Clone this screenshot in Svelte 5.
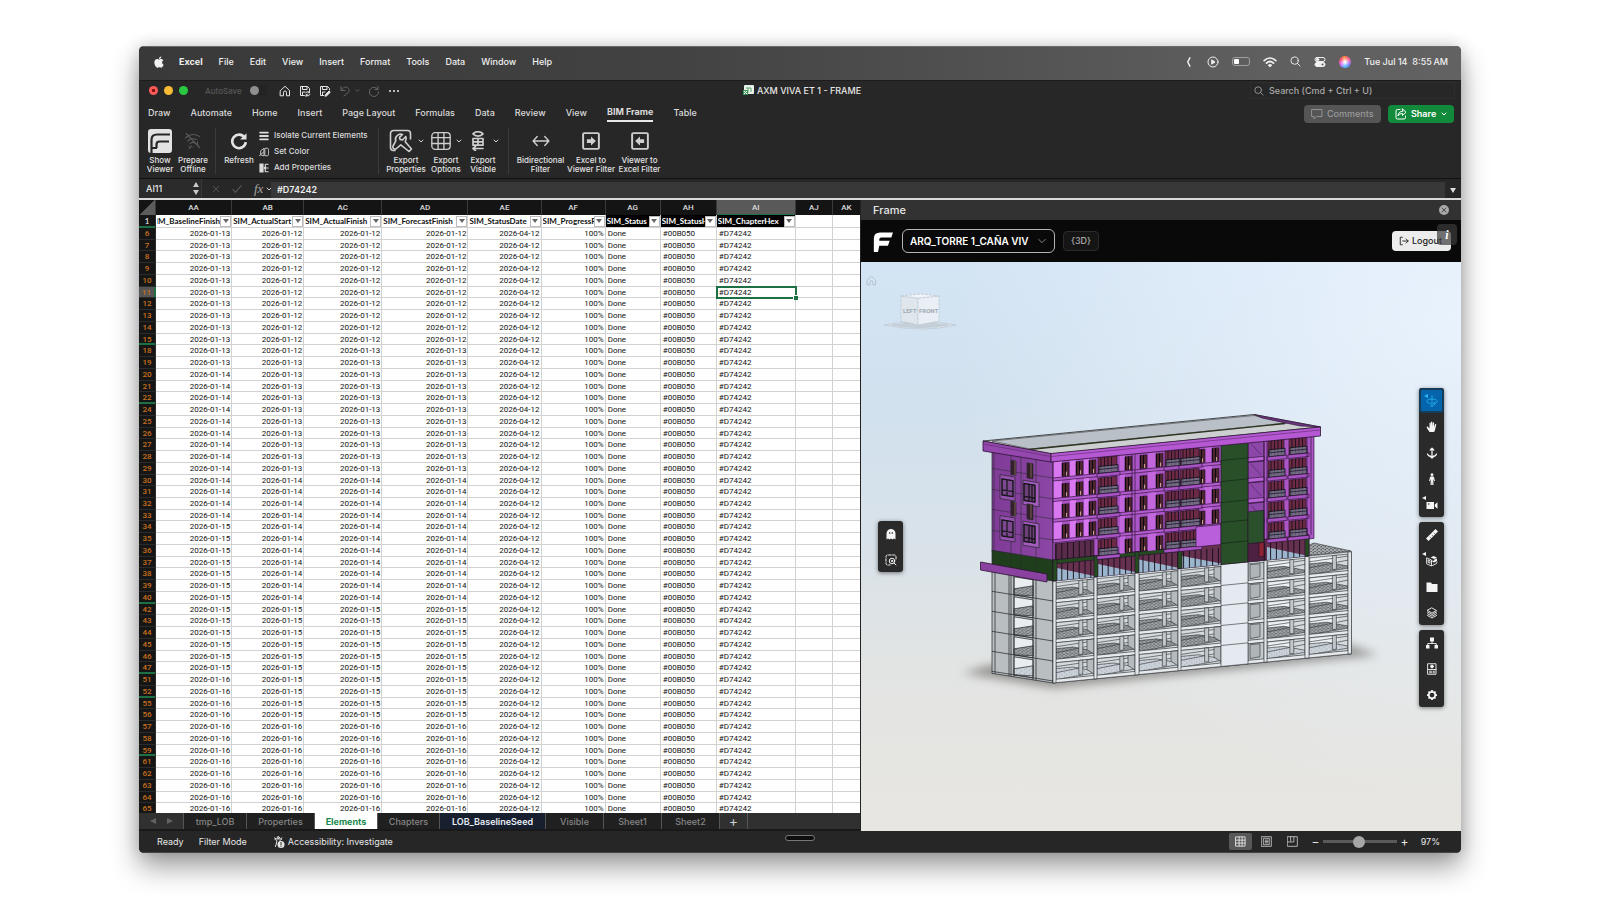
<script>
  const menus = ['File', 'Edit', 'View', 'Insert', 'Format', 'Tools', 'Data', 'Window', 'Help'];
  const tabs = ['Draw', 'Automate', 'Home', 'Insert', 'Page Layout', 'Formulas', 'Data', 'Review', 'View', 'BIM Frame', 'Table'];
  const columns = ['AA', 'AB', 'AC', 'AD', 'AE', 'AF', 'AG', 'AH', 'AI', 'AJ', 'AK'];
  const fields = ['SIM_BaselineFinish', 'SIM_ActualStart', 'SIM_ActualFinish', 'SIM_ForecastFinish', 'SIM_StatusDate', 'SIM_ProgressP', 'SIM_Status', 'SIM_StatusH', 'SIM_ChapterHex'];
  const sheets = [
    { name: 'tmp_LOB', width: 63 },
    { name: 'Properties', width: 68 },
    { name: 'Elements', width: 63 },
    { name: 'Chapters', width: 62 },
    { name: 'LOB_BaselineSeed', width: 106 },
    { name: 'Visible', width: 58 },
    { name: 'Sheet1', width: 58 },
    { name: 'Sheet2', width: 58 }
  ];

  const rowNumbers = [
    6, 7, 8, 9, 10, 11, 12, 13, 14, 15, 18, 19, 20, 21, 22, 24, 25, 26, 27, 28, 29, 30, 31, 32, 33,
    34, 35, 36, 37, 38, 39, 40, 42, 43, 44, 45, 46, 47, 51, 52, 55, 56, 57, 58, 59, 61, 62, 63, 64, 65
  ];
  const gapAfter = [15, 22, 40, 47, 52, 59];
  const date = (day) => `2026-01-${day}`;
  const rows = rowNumbers.map((n) => {
    const finish = n < 18 ? 12 : n < 30 ? 13 : n < 42 ? 14 : n < 57 ? 15 : 16;
    return {
      n,
      cells: [
        date(n < 20 ? 13 : n < 34 ? 14 : n < 51 ? 15 : 16),
        date(n === 18 ? 12 : finish),
        date(finish),
        date(finish),
        '2026-04-12',
        '100%',
        'Done',
        '#00B050',
        '#D74242',
        '',
        ''
      ]
    };
  });

  const navTools = ['orbit', 'hand', 'dolly', 'person', 'camera'];
  const modelTools = ['ruler', 'section', 'folder', 'layers'];
  const panelTools = ['tree', 'props', 'gear'];

  // Facade geometry, in the sheared space of each face: x along the wall, y downward.
  const floors = [0, 1, 2, 3, 4];
  const pitch = 20.6;
  const windows = [9, 23, 36, 72, 87, 103, 145, 159];
  const brightBands = [[1, 8], [17, 6], [31, 5]];
  const paleBands = [[67, 5], [95, 8], [151, 8]];
  const balconies = [[45, 19], [112, 14], [127, 19], [215, 16], [236, 17]];
  const bays = [[3, 38], [44, 38], [86, 39], [127, 41], [195, 16], [214, 38], [256, 39]];
  const posts = [[0, 3], [41, 3], [82, 4], [125, 3], [211, 3], [252, 4], [295, 3.5]];
</script>

{#snippet icon(name, size = 12)}
  <svg class="icon" width={size} height={size} viewBox="0 0 24 24" fill="none" stroke="currentColor" stroke-width="2" stroke-linecap="round" stroke-linejoin="round" aria-hidden="true">
    {#if name === 'apple'}
      <path fill="currentColor" stroke="none" d="M17.3 12.7c0-2.500 2-3.700 2.100-3.800-1.200-1.700-3-1.900-3.600-2-1.500-.15-3 .9-3.700.9-.8 0-2-.9-3.200-.85-1.700 0-3.200 1-4.100 2.450-1.700 3-.4 7.400 1.300 9.900.8 1.200 1.800 2.500 3.100 2.450 1.200-.05 1.700-.8 3.200-.8s1.900.8 3.200.75c1.300 0 2.200-1.200 3-2.400.9-1.400 1.300-2.700 1.300-2.800 0 0-2.600-1-2.600-3.800zM14.900 5.500c.7-.8 1.100-1.900 1-3.100-1 .05-2.200.7-2.900 1.500-.6.7-1.200 1.900-1 3 1.100.1 2.200-.55 2.900-1.400z" />
    {:else if name === 'left'}
      <path stroke-width="3.500" d="M14 2l-5 10 5 10" />
    {:else if name === 'play'}
      <circle cx="12" cy="12" r="10" /><path fill="currentColor" d="M10 8l6 4-6 4z" />
    {:else if name === 'wifi'}
      <path stroke-width="3" d="M2 9.500c6-5.500 14-5.500 20 0M6 13.800c3.700-3.300 8.300-3.300 12 0" /><path fill="currentColor" d="M9.500 17.500c1.500-1.300 3.500-1.300 5 0L12 20z" />
    {:else if name === 'search'}
      <circle cx="10" cy="10" r="8" /><path d="M16 16L22 22" />
    {:else if name === 'control'}
      <rect x="2" y="3" width="20" height="8" rx="4" /><circle cx="7" cy="7" r="2.500" fill="currentColor" /><rect x="2" y="13" width="20" height="8" rx="4" fill="currentColor" /><circle cx="17" cy="17" r="2" fill="#555" stroke="none" />
    {:else if name === 'home'}
      <path d="M3 11l9-8.500L21 11v10.500h-6V15a3 3 0 0 0-6 0v6.500H3z" />
    {:else if name === 'save'}
      <path d="M11 21H3V3h14l4 4v4M7 3v6h9V3M7 21v-7h5" /><path d="M13.500 16a4 4 0 0 1 7-1M21 12v3.500h-3M21.500 19a4 4 0 0 1-7 1M14 23v-3.500h3" />
    {:else if name === 'saveas'}
      <path d="M10 21H3V3h14l4 4v3M7 3v6h9V3M7 21v-7h5" /><path fill="currentColor" d="M12.500 22l1-3.500 6.500-6.500 2.500 2.500-6.500 6.500z" />
    {:else if name === 'undo'}
      <path d="M4 3v8h8M4.500 10.500C8 5 13 2.500 17 5c4.500 3 3.500 8 1 10.500L10 22" />
    {:else if name === 'redo'}
      <path d="M20 3v6h-6M20 9a9.300 9.300 0 1 0 1.300 4.500" />
    {:else if name === 'refresh'}
      <path stroke-width="3.500" stroke-linecap="butt" d="M19.500 7.500A9 9 0 1 0 21 13.500" /><path fill="currentColor" stroke="none" d="M22 1.500V10h-8.500z" />
    {:else if name === 'down'}
      <path stroke-width="4" d="M4 8l8 8 8-8" />
    {:else if name === 'thin'}
      <path stroke-width="2.500" d="M2 7l10 10L22 7" />
    {:else if name === 'frame'}
      <rect width="24" height="24" rx="3" fill="currentColor" stroke="none" /><path stroke="#272727" stroke-width="2.200" stroke-linecap="butt" d="M3.500 24V11Q3.500 5.500 9 5.500H22M8.500 19V15.500Q8.500 12.500 11.500 12.500H21M3.500 19H9" />
    {:else if name === 'offline'}
      <path stroke-width="1.500" d="M2 8c5-5 12-6 19-2M5 12c3-3 7-4 12-2M8 15.500c2-2 5-2 7-.5M3 2l18 19M6 19h.1M12 20h.1M18 13v4M10 19l-3 3" />
    {:else if name === 'isolate'}
      <path stroke-width="4.500" stroke-linecap="butt" d="M1 4h22M1 12h22M1 20h22" />
    {:else if name === 'color'}
      <path d="M11 4L4 9v10l7 2zM15 3h5q3 0 3 3v12q0 3-3 3h-5zM1 21L11 12" />
    {:else if name === 'addprops'}
      <path fill="currentColor" stroke="none" d="M1 1h10v22H1z" /><path stroke-width="2.500" d="M22 3h-7v18h7M22 12h-9M16 8l-4 4 4 4" />
    {:else if name === 'wrench'}
      <path stroke-width="1.600" d="M6 21.500H4.500a3 3 0 0 1-3-3v-14a3 3 0 0 1 3-3h14a3 3 0 0 1 3 3V10" /><path stroke-width="1.600" d="M13.500 5.500a5.300 5.300 0 0 0-6.800 6.600L4 17a2.200 2.200 0 0 0 3.500 2.500l4.300-3.600L20 22.500l2.500-2.500-6.300-7.300a5.300 5.300 0 0 0 .6-5.200L13.500 11l-2.500-.6-.5-2z" />
    {:else if name === 'grid'}
      <rect x="1" y="2" width="22" height="20" rx="4" stroke-width="1.600" /><path stroke-width="1.600" d="M1 8h22M1 15h22M8.500 2v20M15.500 2v20" />
    {:else if name === 'eyegrid'}
      <path d="M6 3.500c3-3.500 9-3.500 12 0-3 3.500-9 3.500-12 0z" /><path d="M6 9h12v8H6zM12 9v8M6 13h12M18 21H6M9 18.500L6 21l3 2.500" />
    {:else if name === 'bidi'}
      <path stroke-width="1.800" d="M2 12h20M7 6l-5.500 6L7 18M17 6l5.500 6-5.500 6" />
    {:else if name === 'boxright'}
      <rect x="1.500" y="1.500" width="21" height="21" rx="1.500" stroke-width="2.600" /><path fill="currentColor" stroke="none" d="M6.500 9.500h5.500V6l6.500 6-6.500 6v-3.500H6.500z" />
    {:else if name === 'boxleft'}
      <rect x="1.500" y="1.500" width="21" height="21" rx="1.500" stroke-width="2.600" /><path fill="currentColor" stroke="none" d="M17.500 9.500H12V6l-6.500 6 6.500 6v-3.500h5.500z" />
    {:else if name === 'comment'}
      <path stroke-width="1.800" d="M2 3h20v14H11l-5 5v-5H2z" />
    {:else if name === 'share'}
      <path d="M10 3H5a3 3 0 0 0-3 3v13a3 3 0 0 0 3 3h13a3 3 0 0 0 3-3v-3" /><path d="M15 2l7 6.500-7 6.500v-4c-4 0-7 1-9 5 .5-6 4-9.500 9-9.500z" />
    {:else if name === 'x'}
      <path stroke-width="2.800" d="M4 4l16 16M20 4L4 20" />
    {:else if name === 'check'}
      <path stroke-width="2.500" d="M2 13l6 7L22 4" />
    {:else if name === 'logo'}
      <path fill="currentColor" stroke="none" d="M1 24V8q0-7.500 7.500-7.500H24l-2 6H10q-2.500 0-2.500 2.500v1.500H20l-2 6H7.500L6 24z" />
    {:else if name === 'logout'}
      <path stroke-width="2.200" d="M8 3H3v18h5M9 12h13M17 7l5 5-5 5" />
    {:else if name === 'orbit'}
      <path stroke-width="1.500" d="M12 1v22M12 8c-6 0-10.500 2-10.500 4.500S6 17 10 17M12 8c6 0 10.500 2 10.500 4.500S19 17 15 17M18 14l-3.500 3 3.500 3M9.500 20.500L12 23l2.500-2.500" />
    {:else if name === 'hand'}
      <path fill="currentColor" stroke="none" d="M7 22C5 19 2.500 15.500 1.500 13c-.5-1.500 1.500-2.500 2.700-1.200L7 15V4.500c0-2 2.600-2 2.600 0L10 11V2.500c0-2 2.700-2 2.700 0V11l1-7c.2-2 2.700-1.700 2.600.3L16 12l2-5c.7-1.700 2.800-1 2.400.8L18.500 16c-.5 3-1.500 4.500-2.500 6z" />
    {:else if name === 'dolly'}
      <path stroke-width="2.500" d="M12 3v18M8.500 6L12 2.500 15.500 6M3 14c1 4 5 4 9 7 4-3 8-3 9-7M8.500 18l3.500 4 3.500-4" />
    {:else if name === 'person'}
      <circle cx="12" cy="3.500" r="2.800" fill="currentColor" stroke="none" /><path fill="currentColor" stroke="none" d="M8.500 7h7l2.500 9-1.500.5L14.500 12l.5 12h-2.500L12 16l-.5 8H9l.5-12-2 4.500L6 16z" />
    {:else if name === 'camera'}
      <path fill="currentColor" stroke="none" d="M1 6h15v14H1zM17.500 11L23 6.500v13L17.500 15z" /><circle cx="5.500" cy="10" r="1.500" fill="#2a2a2a" stroke="none" />
    {:else if name === 'ruler'}
      <path fill="currentColor" stroke="none" d="M0 19L19 0l5 5L5 24z" /><path stroke="#2a2a2a" stroke-width="1" d="M8 16l2 2M12 12l2 2M16 8l2 2" />
    {:else if name === 'section'}
      <path d="M2 6l9 4v12l-9-4z" stroke-width="1.800" /><path stroke-width="1.800" d="M5 10l3 1.500v5L5 15zM13 21l8-4 1-3" /><path fill="currentColor" stroke="none" d="M9 5l6-3 7 3-5 3zM13 11l4-2 5-2v5l-6 3-3-1z" /><circle cx="15" cy="10" r="1.500" fill="#2a2a2a" stroke="none" />
    {:else if name === 'folder'}
      <path fill="currentColor" stroke="none" d="M1 3h9l2 3h11v16H1z" />
    {:else if name === 'layers'}
      <path stroke-width="1.800" d="M12 2l9 5-9 5-9-5zM3 10l9 5 9-5M3 13.500l9 5 9-5M3 17l9 5 9-5" />
    {:else if name === 'tree'}
      <path fill="currentColor" stroke="none" d="M8 1h8v8H8zM0 16h7v7H0zM17 16h7v7h-7z" /><path stroke-width="1.800" d="M12 9v4M3.500 16v-3h17v3" />
    {:else if name === 'props'}
      <path stroke-width="1.800" d="M4 1.500h16v21H4zM4 13h16M7 16.500h4M14 16.500h3M7 19.500h4M14 19.500h3" /><circle cx="12" cy="7" r="2.800" fill="currentColor" />
    {:else if name === 'gear'}
      <circle cx="12" cy="12" r="6.500" stroke-width="3.500" /><path stroke-width="3.500" stroke-linecap="butt" d="M12 2v3M12 19v3M2 12h3M19 12h3M5 5l2 2M17 17l2 2M19 5l-2 2M7 17l-2 2" />
    {:else if name === 'ghost'}
      <path fill="currentColor" stroke="none" d="M3 23V11a9 9 0 0 1 18 0v12l-3-2-3 2-3-2-3 2-3-2z" /><path stroke="#2a2a2a" d="M9.500 9v2M14.500 9v2" />
    {:else if name === 'zoomsel'}
      <path stroke-dasharray="5 3" d="M22 10V5a3 3 0 0 0-3-3H5a3 3 0 0 0-3 3v14a3 3 0 0 0 3 3h5" /><circle cx="14" cy="14" r="5.500" /><circle cx="14" cy="14" r="1.500" /><path d="M18 18l4 4" />
    {:else if name === 'access'}
      <path d="M3 4c5 3 10 3 15 0M4 7c4 1 4 2 3.500 5L5 21M17 7c-3 1-4 2-3.500 4" /><circle cx="10.500" cy="3" r="2" /><circle cx="16" cy="17" r="7" fill="currentColor" stroke="none" /><path stroke="#272727" d="M16 13v5M16 20.500v.2" />
    {:else if name === 'normal'}
      <path stroke-width="1.800" d="M2 2h20v20H2zM2 9h20M2 15.500h20M9 2v20M15.500 2v20" />
    {:else if name === 'layout'}
      <path stroke-width="1.800" d="M1.500 1.500h21v21h-21zM6 5h12v14H6zM9 9h6M9 12h6M9 15h6" />
    {:else if name === 'break'}
      <path stroke-width="1.800" d="M1.500 1.500h21v21h-21zM8 1.500V11M15 1.500V13H1.500" />
    {/if}
  </svg>
{/snippet}

{#snippet tool(name, label, flag = false)}
  <button class="tool" class:active={name === 'orbit'} aria-label={label}>
    {@render icon(name, 12)}
    {#if flag}<span class="flag"></span>{/if}
  </button>
{/snippet}

{#snippet command(name, size, first, second, width, menu = false, dim = false)}
  <button class="command" class:dim style="width: {width}px">
    <span class="command-icon">
      {@render icon(name, size)}
      {#if menu}{@render icon('down', 6)}{/if}
    </span>
    <span>{first}<br />{second}</span>
  </button>
{/snippet}

<div class="page">
  <main class="window">
    <header class="menubar">
      <span class="apple">{@render icon('apple', 14)}</span>
      <strong>Excel</strong>
      {#each menus as item}<span>{item}</span>{/each}
      <div class="tray">
        {@render icon('left', 10)}
        {@render icon('play', 12)}
        <span class="battery"><span></span></span>
        {@render icon('wifi', 14)}
        {@render icon('search', 11)}
        {@render icon('control', 12)}
        <span class="siri"></span>
        <span class="clock">Tue Jul 14 &nbsp;8:55&thinsp;AM</span>
      </div>
    </header>

    <section class="head">
      <div class="titlebar">
        <div class="quick">
          <span class="light red"></span><span class="light yellow"></span><span class="light green"></span>
          <span class="autosave">AutoSave</span>
          <span class="knob"></span>
          {@render icon('home', 12)}
          {@render icon('save', 12)}
          {@render icon('saveas', 12)}
          <span class="faded undo">{@render icon('undo', 12)}{@render icon('down', 5)}</span>
          <span class="faded">{@render icon('redo', 12)}</span>
          <span class="dots"><i></i><i></i><i></i></span>
        </div>
        <div class="title">
          <svg width="11" height="11" viewBox="0 0 11 11" aria-hidden="true"><rect x="1" y="0" width="10" height="9" rx="1" fill="#e9f2ea" /><path d="M3 3h5v4M5 3v5" stroke="#5aa56c" fill="none" /><rect x="0" y="5" width="5" height="5" fill="#3c9257" /><path d="M1 6l3 3M4 6L1 9" stroke="#fff" /></svg>
          AXM VIVA ET 1 - FRAME
        </div>
        <label class="search">{@render icon('search', 10)}<input type="text" placeholder="Search (Cmd + Ctrl + U)" aria-label="Search" /></label>
      </div>

      <div class="tabrow">
        <nav>
          {#each tabs as tab}<button class="tab" class:current={tab === 'BIM Frame'}>{tab}</button>{/each}
        </nav>
        <div class="actions">
          <button class="comments">{@render icon('comment', 12)}Comments</button>
          <button class="share">{@render icon('share', 12)}Share{@render icon('down', 6)}</button>
        </div>
      </div>

      <div class="ribbon">
        <div class="group">
          {@render command('frame', 24, 'Show', 'Viewer', 34)}
          {@render command('offline', 18, 'Prepare', 'Offline', 32, false, true)}
        </div>
        <div class="group">
          {@render command('refresh', 18, 'Refresh', '', 34)}
          <div class="list">
            <button>{@render icon('isolate', 10)}Isolate Current Elements</button>
            <button>{@render icon('color', 10)}Set Color</button>
            <button>{@render icon('addprops', 10)}Add Properties</button>
          </div>
        </div>
        <div class="group soft">
          {@render command('wrench', 24, 'Export', 'Properties', 46, true)}
          {@render command('grid', 20, 'Export', 'Options', 34, true)}
          {@render command('eyegrid', 20, 'Export', 'Visible', 40, true)}
        </div>
        <div class="group soft last">
          {@render command('bidi', 18, 'Bidirectional', 'Filter', 47)}
          {@render command('boxright', 18, 'Excel to', 'Viewer Filter', 54)}
          {@render command('boxleft', 18, 'Viewer to', 'Excel Filter', 43)}
        </div>
      </div>
    </section>

    <div class="formula">
      <div class="namebox">AI11<span class="stepper"><i></i><i></i></span></div>
      <div class="fx">{@render icon('x', 8)}{@render icon('check', 10)}<em>fx</em>{@render icon('down', 6)}</div>
      <input class="value" type="text" value="#D74242" aria-label="Formula" />
      <span class="expand"></span>
    </div>

    <div class="body">
      <div class="sheetpane">
        <div class="gridwrap">
          <table>
            <thead>
              <tr class="letters">
                <th class="corner"></th>
                {#each columns as c}<th class:on={c === 'AI'}>{c}</th>{/each}
              </tr>
              <tr class="fields">
                <th class="num one gap">1</th>
                {#each fields as f, i}
                  <th class:dark={i > 5} class:fromend={i === 0}><span>{f}</span><button aria-label="Filter"></button></th>
                {/each}
                <th></th><th></th>
              </tr>
            </thead>
            <tbody>
              {#each rows as row}
                <tr>
                  <th class="num" class:on={row.n === 11} class:gap={gapAfter.includes(row.n)}>{row.n}</th>
                  {#each row.cells as cell, i}
                    <td class:right={i < 6} class:selected={row.n === 11 && i === 8}>{cell}</td>
                  {/each}
                </tr>
              {/each}
            </tbody>
          </table>
        </div>
        <div class="sheets">
          <span class="arrows"><i></i><i></i></span>
          {#each sheets as s}
            <button class:open={s.name === 'Elements'} class:navy={s.name === 'LOB_BaselineSeed'} style="width: {s.width}px">{s.name}</button>
          {/each}
          <button class="plus">+</button>
        </div>
      </div>

      <aside class="viewer">
        <div class="panehead">Frame<button aria-label="Close">{@render icon('x', 6)}</button></div>
        <div class="viewbar">
          {@render icon('logo', 20)}
          <div class="picker">
            <select aria-label="Model"><option>ARQ_TORRE 1_CAÑA VIV</option></select>
            {@render icon('thin', 8)}
          </div>
          <button class="view3d">{'{3D}'}</button>
          <button class="logout">{@render icon('logout', 10)}Logout</button>
          <button class="info" aria-label="Info">i</button>
        </div>

        <div class="canvas">
          <svg class="scene" viewBox="861 262 600 569" preserveAspectRatio="xMidYMid slice" aria-hidden="true">
            <defs>
              <linearGradient id="sky" x1="0" y1="0" x2="0" y2="1">
                <stop offset="0" stop-color="#d3e4f4" /><stop offset=".25" stop-color="#d1e1ee" />
                <stop offset=".5" stop-color="#d9e2e9" /><stop offset=".72" stop-color="#e2e4e3" /><stop offset="1" stop-color="#e8e6e1" />
              </linearGradient>
              <radialGradient id="glow" cx="1" cy=".1" r=".85"><stop offset="0" stop-color="#edf5ff" stop-opacity=".85" /><stop offset="1" stop-color="#eef5ff" stop-opacity="0" /></radialGradient>
              <pattern id="mesh" width="4" height="3" patternUnits="userSpaceOnUse"><rect width="4" height="3" fill="#a5a9ac" /><path d="M0 1h2M2 2.500h2M1 0l1 1" stroke="#404447" stroke-width=".6" /></pattern>
              <pattern id="speck" width="5" height="4" patternUnits="userSpaceOnUse"><rect width="5" height="4" fill="#ccd3da" /><path d="M1 1h.8M3.500 3h.8" stroke="#6a7178" stroke-width=".7" /></pattern>
              <filter id="soft" x="-20%" y="-100%" width="140%" height="300%"><feGaussianBlur stdDeviation="5" /></filter>
              <linearGradient id="wall" x1="0" y1="0" x2="1" y2="0"><stop offset="0" stop-color="#7f3b96" /><stop offset="1" stop-color="#8c46a5" /></linearGradient>
            </defs>
            <rect x="861" y="262" width="600" height="569" fill="url(#sky)" />
            <rect x="861" y="262" width="600" height="569" fill="url(#glow)" />
            <path d="M962 673L1053 688L1378 655L1350 645L990 665Z" fill="#6d6b68" opacity=".65" filter="url(#soft)" />

            <!-- side face -->
            <g transform="translate(1053 461) skewY(9)" stroke="#272a2c" stroke-width=".7">
              <rect x="-61" y="118" width="61" height="104" fill="#b9bec1" />
              {#each floors as f}
                {@const y = 120 + f * 20}
                <rect x="-39" y={y + 2} width="19" height="18" fill="#e9edef" />
                <path d="M-39 {y + 20}V{y + 14}L-20 {y + 8}V{y + 18}Z" fill={f === 4 ? 'url(#speck)' : 'url(#mesh)'} />
                <path d="M-61 {y + 20}H0" fill="none" />
              {/each}
              <path d="M-58 118V222M-44 118V222M-42 118V222M-39 118V222M-20 118V222M-17 118V222" fill="none" />
              <rect x="-61" y="0" width="61" height="100" fill="url(#wall)" />
              <rect x="-61" y="99" width="61" height="21" fill="#1f3f1c" />
              <path d="M-61 17H0M-61 38H0M-61 58H0M-61 79H0M-42 0V120M-32 0V120M-17 0V120M-59 0V99" fill="none" stroke-width=".5" />
              {#each [6, 47] as y}
                <rect x="-42" y={y} width="5" height="14" fill="#33202a" /><rect x="-26" y={y} width="6" height="15" fill="#33202a" />
                <path d="M-38 {y}v14M-22 {y}v14" stroke="#9c7a64" />
                <rect x="-53" y={y + 16} width="15" height="24" fill="#9650b0" /><rect x="-51" y={y + 20} width="11" height="16" fill="#7d4890" />
                <rect x="-30" y={y + 18} width="16" height="24" fill="#a35cbd" /><rect x="-29" y={y + 21} width="11" height="17" fill="#6e4079" />
                <path d="M-51 {y + 20}h11v16h-11zM-51 {y + 31}h11M-46 {y + 20}v16M-29 {y + 21}h11v17h-11zM-24 {y + 21}v17M-21 {y + 21}v17M-29 {y + 34}h11" fill="none" stroke="#141418" stroke-width="1.200" />
              {/each}
            </g>
            <path d="M980.500 562L1047 574V582L980.500 570Z" fill="#8a419f" stroke="#2a1432" stroke-width=".8" />

            <!-- concrete slabs and posts -->
            <path d="M1304 547L1314 543L1351 551L1305 556Z" fill="url(#mesh)" stroke="#333" stroke-width=".6" />
            <g transform="translate(1053 461) skewY(-5.600)" stroke="#2e3236" stroke-width=".6">
              <rect x="0" y="120" width="298.500" height="102" fill="#dfe3e5" />
              {#each floors as f}
                {@const y = 122 + f * 20}
                {#each bays as [x, w], b}
                  <rect {x} {y} width={w} height="17" fill={w < 20 ? '#c3c8ca' : '#d5dadd'} />
                  {#if w > 20}
                    {#if b > 4}<rect x={x + 2} y={y + 1} width={w - 12} height="7" fill="#eef1f4" stroke="none" />{/if}
                    <path d="M{x} {y + 17}V{y + 6}L{x + w * 0.45} {y + 6}L{x + w} {y + 12}V{y + 14}Z" fill={f === 4 ? 'url(#speck)' : 'url(#mesh)'} />
                    <path d="M{x} {y + 4}L{x + w} {y + 2}M{x} {y + 10}L{x + w} {y + 6}" fill="none" />
                    <path d="M{x + w * 0.6} {y}v14h4v-14z" fill="#c1c6ca" />
                    {#if b < 4}<path d="M{x + w - 7} {y}h7v15l-7-5z" fill="#b4babe" />{/if}
                  {:else}
                    <path d="M{x + 2} {y + 1}v14l10-1v-13z" fill="#aeb4b7" />
                  {/if}
                {/each}
                <rect x="0" y={y + 16.500} width="298.500" height="3.500" fill="#e7eaec" />
              {/each}
              {#each posts as [x, w]}<rect {x} y="120" width={w} height="102" fill="#e2e6e9" />{/each}
              <rect x="168" y="119" width="27" height="103" fill="#e5eaf1" />
              <path d="M168 141h27M168 161h27M168 181h27M168 201h27" />
            </g>

            <!-- front face, upper floors -->
            <g transform="translate(1053 461) skewY(-5.600)" stroke="#25102c" stroke-width=".6">
              <rect x="0" y="0" width="261" height="103" fill="#ab55c6" />
              <rect x="0" y="99" width="256" height="21" fill="#66304f" />
              {#each bays.slice(0, 6) as [x, w]}
                <path d="M{x} 107L{x + w} 119V120H{x}Z" fill="#9cb5cf" stroke="none" />
              {/each}
              <rect x="2" y="83" width="39" height="16" fill="#5b2b4b" />
              {#each Array(44) as _, i}<path d="M{3 + i * 5.800} {i < 7 ? 83 : 103}V120" stroke="#120e16" stroke-width=".9" />{/each}
              <rect x="0" y="99" width="125" height="4" fill="#244a20" />
              {#each [0, 41, 82, 125, 252] as x}<rect {x} y="99" width="4" height="21" fill="#244a20" />{/each}
              {#each floors as f}
                {@const y = f * pitch}
                {#if f < 4}
                  {#each brightBands as [x, w]}<rect {x} {y} width={w} height="17" fill="#d877f0" stroke="none" />{/each}
                {/if}
                {#each paleBands as [x, w]}<rect {x} {y} width={w} height="17" fill="#c266de" stroke="none" />{/each}
                {#each windows as x, i}
                  {#if f < 4 || (i > 2 && i < 6)}
                    <rect {x} y={y + 3} width="7" height="13.500" fill="#4c2530" />
                    <path d="M{x + 3.500} {y + 3}v13M{x + 0.500} {y + 3}v13" stroke="#0d090d" stroke-width="1" />
                    <path d="M{x + 4.500} {y + 12}v4" stroke="#c99a96" stroke-width="1.200" />
                  {/if}
                {/each}
                {#if f < 4}<path d="M0 {y + 17}H168V{y + 20}H0Z" fill="#b45bd0" />{/if}
                {#each balconies as [x, w]}
                  <rect {x} y={y + 1} width={w} height="16" fill="#6d2a46" />
                  <path d="M{x + 3} {y + 1}v15M{x + 6.500} {y + 1}v15M{x + 10} {y + 1}v15M{x + 13.500} {y + 1}v15" stroke="#1d0f18" stroke-width=".9" />
                  <rect x={x + 1} y={y + 10} width={w} height="7" fill="#829cb8" fill-opacity=".55" stroke="#14141c" stroke-width=".9" />
                  <path d="M{x + 1} {y + 13}h{w}" stroke="#1c1c28" stroke-width=".8" />
                  <path d="M{x - 1} {y + 17}h{w + 4}v3.500h-{w + 4}z" fill="#a853c4" />
                {/each}
                <rect x="195" y={y} width="16" height="21" fill="#8d47a8" />
                <path d="M195 {y + 16}l16 0v4h-16z" fill="#ba63d8" />
                <path d="M198 {y + 2}l10 12" stroke-width=".4" />
              {/each}
              <rect x="143" y="80" width="25" height="20" fill="#b95fdb" />
              <rect x="168" y="-1" width="27" height="121" fill="#294f29" />
              <path d="M168 16h27M168 37h27M168 58h27M168 78h27M168 99h27" stroke="#10220f" />
              <rect x="195" y="70" width="16" height="32" fill="#2b512c" />
              <rect x="195" y="102" width="16" height="18" fill="#4d2142" /><rect x="206" y="102" width="5" height="14" fill="#8b2335" />
              <path d="M79 0V99M82 0V99M211 0V99M214 0V99M254 0V99M258 0V99" />
            </g>

            <!-- roof -->
            <path d="M983 441L1254 414.500L1320.500 427L1051 454Z" fill="#cdd0d1" stroke="#24272a" stroke-width=".8" />
            <path d="M992 441L1254 415.500L1287 423L1030 449Z" fill="#b9c0c7" stroke="#3a3d40" stroke-width=".6" />
            <path d="M1029 449.500L1285 423.500" stroke="#2d3320" stroke-width="1.300" />
            <path d="M1254 414.500L1320.500 427L1300 426L1262 418Z" fill="#6c3481" stroke="#2b1532" stroke-width=".6" />
            <path d="M983 441L1051 453.500V462L983 451Z" fill="#9447ad" stroke="#2b1532" stroke-width=".8" />
            <path d="M1051 453.500L1320.500 427V436L1051 462Z" fill="#b658d4" stroke="#2b1532" stroke-width=".8" />
            <path d="M983 444L1051 456.500L1320 430" fill="none" stroke="#592a68" stroke-width=".6" />

            <!-- orientation cube -->
            <g stroke="#bac6d0" stroke-width=".7">
              <path d="M884 325q37-7 72 0-32 8-72 0z" fill="#dce6ee" />
              <path d="M892 325q28-4 56 0-28 5-56 0z" fill="#c5d0d9" />
              <path d="M901 296L918 298V325L901 321Z" fill="#dfe7ed" stroke-dasharray="3 1" /><path d="M918 298L939 296V321L918 325Z" fill="#e9eff4" stroke-dasharray="3 1" />
              <path d="M901 296L921 294L939 296L918 298Z" fill="#f1f5f8" stroke-dasharray="3 1" />
            </g>
            <g font-family="Roboto, sans-serif" font-size="6" font-weight="700" fill="#9fa9b2">
              <text x="903" y="313">LEFT</text><text x="919" y="313">FRONT</text>
            </g>
          </svg>

          <span class="gohome">{@render icon('home', 11)}</span>
          <div class="dock leftdock">
            <div class="toolset">{@render tool('ghost', 'Ghost')}{@render tool('zoomsel', 'Zoom selection')}</div>
          </div>
          <div class="dock rightdock">
            <div class="toolset">{#each navTools as t}{@render tool(t, t, t === 'orbit' || t === 'camera')}{/each}</div>
            <div class="toolset">{#each modelTools as t}{@render tool(t, t, t === 'section')}{/each}</div>
            <div class="toolset">{#each panelTools as t}{@render tool(t, t)}{/each}</div>
          </div>
        </div>
      </aside>
    </div>

    <footer class="status">
      <span>Ready</span><span>Filter Mode</span>
      <span class="access">{@render icon('access', 12)}Accessibility: Investigate</span>
      <span class="pill"></span>
      <div class="zoom">
        <button class="mode picked" aria-label="Normal view">{@render icon('normal', 11)}</button>
        <button class="mode" aria-label="Page layout">{@render icon('layout', 11)}</button>
        <button class="mode" aria-label="Page break">{@render icon('break', 11)}</button>
        <span class="sign minus">−</span>
        <input type="range" min="0" max="200" value="97" aria-label="Zoom" />
        <span class="sign">+</span>
        <span class="percent">97%</span>
      </div>
    </footer>
  </main>
</div>

<style>
  :global(body) { margin: 0; background: #fff; }
  * { box-sizing: border-box; }
  button, input, select { font: inherit; color: inherit; border: 0; padding: 0; margin: 0; background: none; }
  button { white-space: nowrap; }
  .icon { display: block; flex: none; }
  .page { min-height: 100vh; padding: 46px 139px 47px; display: flex; font: 500 9px/12px Inter, "Liberation Sans", sans-serif; color: #e6e6e6; }
  .window { flex: 1; min-width: 0; display: flex; flex-direction: column; border-radius: 5px; overflow: hidden; background: #272727; box-shadow: 0 14px 28px rgba(0, 0, 0, .38), 0 0 16px rgba(0, 0, 0, .16); }

  .menubar { height: 34px; flex: none; display: flex; align-items: center; gap: 16px; padding: 0 13px 4px; background: linear-gradient(90deg, #393939, #424242 40%, #5f5f5f 85%, #626262); color: #f0f0f0; border-top: 1px solid #6b6b6b; }
  .menubar strong { font-weight: 700; margin-left: -3px; }
  .tray { margin-left: auto; display: flex; align-items: center; gap: 13px; }
  .battery { width: 18px; height: 9px; border: 1px solid #a0a0a0; border-radius: 3px; padding: 1px; }
  .battery span { display: block; width: 5px; height: 5px; background: #fff; border-radius: 1px; }
  .siri { width: 12px; height: 12px; border-radius: 50%; background: radial-gradient(circle, #fff 5%, transparent 55%), conic-gradient(#ff7a4d, #ff5fa2, #7a7bff, #4fc0ff, #d76bff, #ff4f6d, #ff9a3d); }
  .clock { font-size: 9px; }

  .head { flex: none; background: #272727; border-bottom: 1px solid #111; border-top: 1px solid #1c1c1c; }
  .titlebar { height: 19px; display: grid; grid-template-columns: 1fr auto 1fr; align-items: center; padding: 0 6px 0 10px; }
  .quick { display: flex; align-items: center; gap: 8px; }
  .light { width: 9px; height: 9px; border-radius: 50%; margin-right: -2px; }
  .red { background: radial-gradient(circle, #7c0c10 20%, #fb5a57 30%); }
  .yellow { background: #f8ba35; }
  .green { background: #2ac840; }
  .autosave { color: #575757; margin-left: 11px; font-size: 8px; }
  .knob { width: 9px; height: 9px; border-radius: 50%; background: #8f8f8f; box-shadow: 7px 0 0 1px #232323; margin-right: 12px; }
  .faded { color: #666; display: flex; align-items: center; }
  .undo { gap: 4px; }
  .dots { display: flex; gap: 2px; margin-left: 1px; }
  .dots i { width: 2px; height: 2px; border-radius: 50%; background: #e6e6e6; }
  .title { display: flex; align-items: center; gap: 3px; font-weight: 500; }
  .search { justify-self: end; width: 205px; height: 17px; display: flex; align-items: center; gap: 5px; padding-left: 3px; border: 1px solid #2d2d2d; color: #a5a5a5; }
  .search input { flex: 1; min-width: 0; }
  .search input::placeholder { color: #a9a9a9; opacity: 1; }

  .tabrow { height: 27px; display: flex; justify-content: space-between; padding: 2px 7px 0 9px; }
  nav { display: flex; gap: 20px; align-items: flex-start; }
  .tab { height: 20px; padding-top: 1px; color: #dadada; }
  .current { font-weight: 700; border-bottom: 2px solid #e8e8e8; }
  .actions { display: flex; gap: 7px; padding-top: 3px; font-size: 9px; }
  .comments, .share { height: 18px; border-radius: 4px; display: flex; align-items: center; gap: 4px; padding: 0 7px; }
  .comments { width: 77px; background: #555; color: #999; }
  .share { width: 66px; background: #128a3c; color: #fff; font-weight: 600; gap: 4px; }
  .share .icon:last-child { margin-left: 1px; }

  .ribbon { display: flex; height: 51px; padding-left: 4px; font-size: 8px; line-height: 9px; }
  .group { display: flex; height: 46px; margin-top: 1px; padding-right: 6px; margin-right: 6px; border-right: 1px solid #3b3b3b; align-items: flex-start; }
  .soft { padding-right: 5px; margin-right: 8px; margin-left: -2px; }
  .last { border: 0; margin-left: 0; }
  .command { display: flex; flex-direction: column; align-items: center; color: #e2e2e2; }
  .command > span:last-child { margin: 0 -10px; }
  .command-icon { height: 28px; display: flex; align-items: center; justify-content: center; gap: 5px; padding-bottom: 3px; }
  .soft .command-icon { color: #cfcfcf; }
  .dim .command-icon { color: #595959; }
  .list { width: 116px; padding: 3px 0 0 3px; display: flex; flex-direction: column; gap: 7px; }
  .list button { display: flex; align-items: center; gap: 5px; height: 9px; color: #dcdcdc; }

  .formula { flex: none; height: 21px; display: flex; align-items: stretch; background: #272727; border-bottom: 2px solid #dadada; }
  .namebox { width: 63px; padding: 0 2px 0 7px; display: flex; align-items: center; justify-content: space-between; background: #2b2b2b; border-right: 1px solid #383838; }
  .stepper { display: flex; flex-direction: column; gap: 3px; }
  .stepper i { border: 3px solid transparent; border-top: 0; border-bottom: 5px solid #c9c9c9; }
  .stepper i + i { transform: rotate(180deg); }
  .fx { width: 69px; display: flex; align-items: center; gap: 12px; padding-left: 10px; color: #595959; }
  .fx em { font: italic 13px/13px "Liberation Serif", serif; color: #a5a5a5; margin-right: -9px; }
  .fx .icon:last-child { color: #ccc; }
  .value { flex: 1; min-width: 0; margin-top: 3px; padding-left: 6px; background: #383838; color: #eee; font-weight: 600; }
  .expand { width: 16px; margin: 3px 0 0; background: #272727; display: grid; place-items: center; }
  .expand::before { content: ""; border: 3px solid transparent; border-top: 5px solid #ddd; border-bottom: 0; }

  .body { flex: 1; min-height: 0; display: grid; grid-template-columns: 722fr 600fr; }
  .sheetpane { display: flex; flex-direction: column; min-width: 0; background: #fff; }
  .gridwrap { height: 613px; overflow: hidden; }
  table { display: block; color: #111; font: 400 8px/8px Roboto, "Liberation Sans", sans-serif; }
  thead { display: block; }
  tbody { display: grid; grid-auto-rows: 1fr; height: 587px; }
  tr { display: grid; grid-template-columns: 17fr 76fr 72fr 78fr 86fr 73fr 64fr 55fr 56fr 79fr 37fr 28fr; }
  th, td { min-width: 0; padding: 2px 2px 0; white-space: nowrap; overflow: hidden; border-right: 1px solid #d2d2d2; border-bottom: 1px solid #d2d2d2; text-align: left; }
  td.right { text-align: right; padding-right: 1px; }
  td.selected { position: relative; overflow: visible; outline: 2px solid #1d7044; outline-offset: -1px; z-index: 1; }
  td.selected::after { content: ""; position: absolute; right: -3px; bottom: -3px; width: 4px; height: 4px; background: #1d7044; border: 1px solid #fff; border-width: 1px 0 0 1px; }
  .letters th { height: 15px; background: #141414; color: #ddd; border-color: #3a3a3a; border-bottom: 0; text-align: center; font: 500 8px/15px Roboto, sans-serif; padding: 0; }
  .letters th.on { background: #595959; box-shadow: inset 0 -1px #1d7044; }
  .letters .corner { background: linear-gradient(135deg, #141414 50%, #5c5c5c 50%); }
  .fields th { height: 13px; display: flex; align-items: center; padding: 0 0 0 1px; font: 700 8px/12px Lato, "Liberation Sans", sans-serif; }
  .fields th span { flex: 1; min-width: 0; overflow: hidden; }
  .fields .fromend span { display: flex; justify-content: flex-end; }
  .fields button { flex: none; width: 11px; height: 11px; background: #fff; border: 1px solid #bbb; display: grid; place-items: center; }
  .fields button::before { content: ""; border: 3px solid transparent; border-top: 4px solid #666; border-bottom: 0; }
  .fields .dark { background: #000; color: #fff; }
  th.num { background: #161616; color: #c9701c; text-align: center; font-weight: 500; border-color: #2b2b2b; padding: 2px 0 0; }
  .fields th.one { color: #eee; justify-content: center; padding: 0; }
  th.num.on { background: #555; border-right: 2px solid #1d7044; }
  th.num.gap { border-bottom-color: #1d7044; box-shadow: inset 0 -1px #1d7044; }

  .sheets { flex: 1; height: 18px; display: flex; background: #303030; color: #858585; border-bottom: 2px solid #191919; }
  .arrows { width: 45px; display: flex; align-items: center; gap: 11px; padding-left: 11px; border-right: 1px solid #555; }
  .arrows i { border: 3px solid transparent; border-left: 0; border-right: 6px solid #626262; }
  .arrows i + i { transform: rotate(180deg); }
  .sheets button { background: #202020; border-right: 1px solid #555; padding-top: 1px; }
  .sheets .open { background: #fff; color: #16874a; font-weight: 700; }
  .sheets .navy { background: #18202f; color: #e8edf5; font-weight: 600; }
  .sheets .plus { width: 28px; background: #303030; font: 400 14px/14px Inter, sans-serif; color: #ccc; padding: 0; }

  .viewer { display: flex; flex-direction: column; min-width: 0; box-shadow: -1px 0 #222; }
  .panehead { height: 20px; flex: none; display: flex; align-items: center; justify-content: space-between; padding: 0 12px; background: #323232; font-size: 11px; }
  .panehead button { width: 10px; height: 10px; border-radius: 50%; background: #a9a9a9; color: #222; display: grid; place-items: center; }
  .viewbar { position: relative; height: 42px; flex: none; display: flex; align-items: center; background: #090909; padding: 0 10px 0 12px; color: #fff; }
  .viewbar > .icon { margin-top: 2px; }
  .picker { position: relative; width: 153px; height: 24px; margin: 0 8px 0 9px; border: 1px solid #b5b5b5; border-radius: 6px; display: flex; align-items: center; }
  .picker select { appearance: none; width: 100%; height: 22px; padding: 0 20px 0 7px; font-size: 10px; font-weight: 600; }
  .picker .icon { position: absolute; right: 8px; opacity: .6; }
  .view3d { width: 36px; height: 20px; border: 1px solid #2b2b2b; border-radius: 4px; background: #151515; color: #aaa; }
  .logout { margin-left: auto; width: 59px; height: 20px; border-radius: 4px; background: #ececec; color: #222; font-size: 9px; display: flex; align-items: center; gap: 3px; padding-left: 7px; }
  .info { position: absolute; right: 4px; top: 4px; width: 20px; height: 21px; border-radius: 4px; background: rgba(60, 60, 60, .7); font: italic 700 12px/20px "Liberation Serif", serif; }
  .canvas { position: relative; flex: 1; min-height: 0; background: #dfe6ea; }
  .scene { position: absolute; inset: 0; width: 100%; height: 100%; }
  .gohome { position: absolute; left: 5px; top: 13px; color: #b3bfc9; }
  .dock { position: absolute; display: flex; flex-direction: column; gap: 5px; }
  .leftdock { left: 17px; top: 259px; }
  .rightdock { right: 17px; top: 126px; }
  .toolset { width: 25px; background: #2a2a2a; border-radius: 3px; box-shadow: 0 1px 4px rgba(0, 0, 0, .5); display: flex; flex-direction: column; gap: 1px; }
  .tool { position: relative; width: 25px; height: 25px; display: grid; place-items: center; color: #f4f4f4; }
  .tool.active { background: #0565ac; color: #27b5f5; border: 2px solid #173c58; border-radius: 3px; }
  .flag { position: absolute; left: 3px; top: 4px; border: 2px solid transparent; border-left: 0; border-right: 4px solid currentColor; }

  .status { position: relative; height: 22px; flex: none; display: flex; align-items: center; gap: 15px; padding: 0 13px 0 18px; background: #262626; border-bottom: 1px solid #444; font-weight: 400; }
  .access { display: flex; align-items: center; gap: 3px; margin-left: 11px; }
  .pill { position: absolute; left: 50%; top: 4px; width: 30px; height: 6px; margin-left: -15px; border: 1px solid #777; border-radius: 3px; background: #0e0e0e; }
  .zoom { margin-left: auto; display: flex; align-items: center; gap: 3px; }
  .mode { width: 23px; height: 17px; display: grid; place-items: center; border-radius: 2px; color: #ccc; }
  .picked { background: #585858; color: #f2f2f2; }
  .sign { font-size: 12px; width: 9px; text-align: center; }
  .minus { margin-left: 4px; }
  .zoom input { appearance: none; width: 74px; height: 12px; background: linear-gradient(#5a5a5a, #5a5a5a) center / 100% 3px no-repeat; }
  .zoom input::-webkit-slider-thumb { appearance: none; width: 12px; height: 12px; border-radius: 50%; background: #a6a6a6; }
  .percent { width: 36px; text-align: right; padding-right: 8px; }
</style>
